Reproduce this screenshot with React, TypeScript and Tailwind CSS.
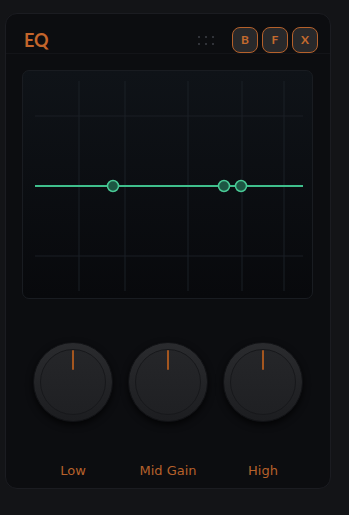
export default function App() {
  const knobs = ["Low", "Mid Gain", "High"];
  const vLines = [56, 102, 165, 219, 261];
  const nodes = [90, 201, 218];

  return (
    <div className="w-[349px] h-[515px] bg-[#131417] pt-[13px] pl-[5px] font-['Lato',sans-serif]">
      <div className="w-[326px] h-[476px] rounded-[12px] border border-[#1b1c21] bg-[#0c0d10]">
        {/* header */}
        <div className="flex items-center justify-between h-[40px] pt-[13px] pl-[18px] pr-[12px] border-b border-[#131418]">
          <span className="text-[18px] font-bold text-[#c4652b] leading-none">EQ</span>
          <div className="flex items-center">
            <div className="grid grid-cols-3 gap-x-[5px] gap-y-[5px] mr-[18px]">
              {[0, 1, 2, 3, 4, 5].map((i) => (
                <span key={i} className="w-[2px] h-[2px] rounded-full bg-[#3c3f46]" />
              ))}
            </div>
            <div className="flex gap-[4px]">
              {["B", "F", "X"].map((b) => (
                <button
                  key={b}
                  className="w-[26px] h-[26px] rounded-[8px] border-[1.5px] border-[#b5612b] bg-[#29292b] text-[12px] font-bold text-[#c46a2e] flex items-center justify-center"
                >
                  {b}
                </button>
              ))}
            </div>
          </div>
        </div>

        {/* curve display */}
        <div className="mt-[16px] ml-[16px] w-[291px] h-[229px] rounded-[7px] border border-[#191c21] bg-gradient-to-b from-[#0f1318] to-[#08090c] overflow-hidden">
          <svg width="291" height="229" viewBox="0 0 291 229">
            {vLines.map((x) => (
              <line key={x} x1={x} y1={10} x2={x} y2={220} stroke="#1b2026" strokeWidth={1} />
            ))}
            <line x1={12} y1={45} x2={280} y2={45} stroke="#1a1f25" strokeWidth={1} />
            <line x1={12} y1={185} x2={280} y2={185} stroke="#1a1f25" strokeWidth={1} />
            <line x1={12} y1={115} x2={280} y2={115} stroke="#3fbf8c" strokeWidth={2} />
            {nodes.map((x) => (
              <circle key={x} cx={x} cy={115} r={5.5} fill="#1d5643" stroke="#49c895" strokeWidth={1.5} />
            ))}
          </svg>
        </div>

        {/* knobs */}
        <div className="flex mt-[43px] pl-[27px] gap-[15px]">
          {knobs.map((k) => (
            <div key={k} className="w-[80px] flex flex-col items-center">
              <div className="relative w-[80px] h-[80px] rounded-full bg-gradient-to-b from-[#2a2b2e] to-[#1c1d20] shadow-[0_3px_7px_rgba(0,0,0,0.75)] border border-[#111215]">
                <div className="absolute inset-[6px] rounded-full border border-[#17181b] bg-gradient-to-b from-[#252629] to-[#1f2023]" />
                <div className="absolute left-1/2 -translate-x-1/2 top-[7px] w-[2px] h-[20px] bg-[#a4561f] rounded-sm" />
              </div>
              <span className="mt-[42px] text-[13px] text-[#b7612b] font-['DejaVu_Sans',sans-serif] leading-none">
                {k}
              </span>
            </div>
          ))}
        </div>
      </div>
    </div>
  );
}
